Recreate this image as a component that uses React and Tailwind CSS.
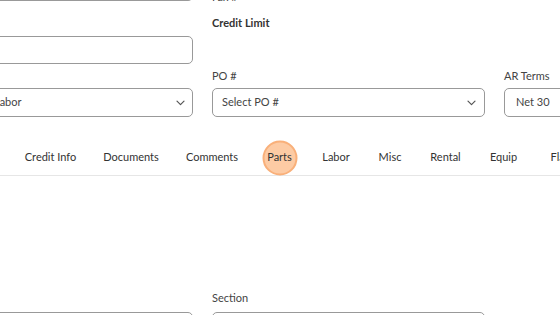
import React from "react";

const Chevron = () => (
  <svg width="9" height="6" viewBox="0 0 9 6" fill="none" stroke="#555" strokeWidth="1.2" strokeLinecap="round" strokeLinejoin="round">
    <path d="M1 1.2l3.5 3.5L8 1.2" />
  </svg>
);

const tabs = [
  ["Credit Info", 47],
  ["Documents", 51],
  ["Comments", 48],
  ["Parts", 24],
  ["Labor", 26],
  ["Misc", 19],
  ["Rental", 29],
  ["Equip", 24],
  ["Flat Rate", 50],
];

export default function App() {
  return (
    <div className="w-[560px] h-[315px] overflow-hidden bg-white text-[#333]" style={{ fontFamily: 'Lato, "Open Sans", sans-serif' }}>
      <div className="ml-[-80px] mt-[-14px] w-[900px]">
        <div className="grid grid-cols-[273px_273px_272px] gap-x-[19px] h-[15px]">
          <div className="h-[15px] border border-[#999] rounded-b-[5px] border-t-0" />
          <div className="text-[11px] text-[#444] leading-[15px] pt-[3px]">Fax #</div>
          <div />
        </div>
        <div className="grid grid-cols-[273px_273px_272px] gap-x-[19px] mt-[13px]">
          <div />
          <div className="text-[11px] font-bold text-[#333] leading-[18px]">Credit Limit</div>
          <div />
        </div>
        <div className="grid grid-cols-[273px_273px_272px] gap-x-[19px] mt-[4px]">
          <div className="h-[28px] border border-[#999] rounded-[5px]" />
          <div />
          <div />
        </div>
        <div className="grid grid-cols-[273px_273px_272px] gap-x-[19px] mt-[5px]">
          <div className="flex flex-col">
            <div className="h-[14px] mb-[5px]" />
            <div className="h-[29px] border border-[#999] rounded-[5px] flex items-center justify-between pl-[73px] pr-[7px] text-[11px] text-[#444]">
              <span>Labor</span>
              <Chevron />
            </div>
          </div>
          <div className="flex flex-col">
            <div className="text-[11px] text-[#444] leading-[14px] mb-[5px]">PO #</div>
            <div className="h-[29px] border border-[#999] rounded-[5px] flex items-center justify-between pl-[9px] pr-[8px] text-[11px] text-[#444]">
              <span>Select PO #</span>
              <Chevron />
            </div>
          </div>
          <div className="flex flex-col">
            <div className="text-[11px] text-[#444] leading-[14px] mb-[5px]">AR Terms</div>
            <div className="h-[29px] border border-[#999] rounded-[5px] flex items-center pl-[11px] text-[11px] text-[#444]">
              <span>Net 30</span>
            </div>
          </div>
        </div>
      </div>

      <div className="mt-[23px] border-b border-[#e6e6e6] h-[36px] flex items-center pl-[27px]">
        <div className="flex items-center gap-[31.5px] text-[11px] text-[#333] whitespace-nowrap">
          {tabs.map(([t, w]) =>
            t === "Parts" ? (
              <div key={t} className="relative flex justify-center" style={{ width: w }}>
                <div className="absolute left-1/2 top-1/2 -translate-x-1/2 -translate-y-1/2 w-[35px] h-[35px] rounded-full bg-[#fdcba4] border-2 border-[#f9b07a]" />
                <span className="relative">{t}</span>
              </div>
            ) : (
              <div key={t} className="flex justify-center" style={{ width: w }}>
                <span>{t}</span>
              </div>
            )
          )}
        </div>
      </div>

      <div className="ml-[-80px] mt-[115px] w-[900px] grid grid-cols-[273px_273px_272px] gap-x-[19px]">
        <div className="flex flex-col">
          <div className="h-[14px] mb-[7px]" />
          <div className="h-[28px] border border-[#999] rounded-[5px]" />
        </div>
        <div className="flex flex-col">
          <div className="text-[11px] text-[#444] leading-[14px] mb-[7px]">Section</div>
          <div className="h-[28px] border border-[#999] rounded-[5px]" />
        </div>
      </div>
    </div>
  );
}
